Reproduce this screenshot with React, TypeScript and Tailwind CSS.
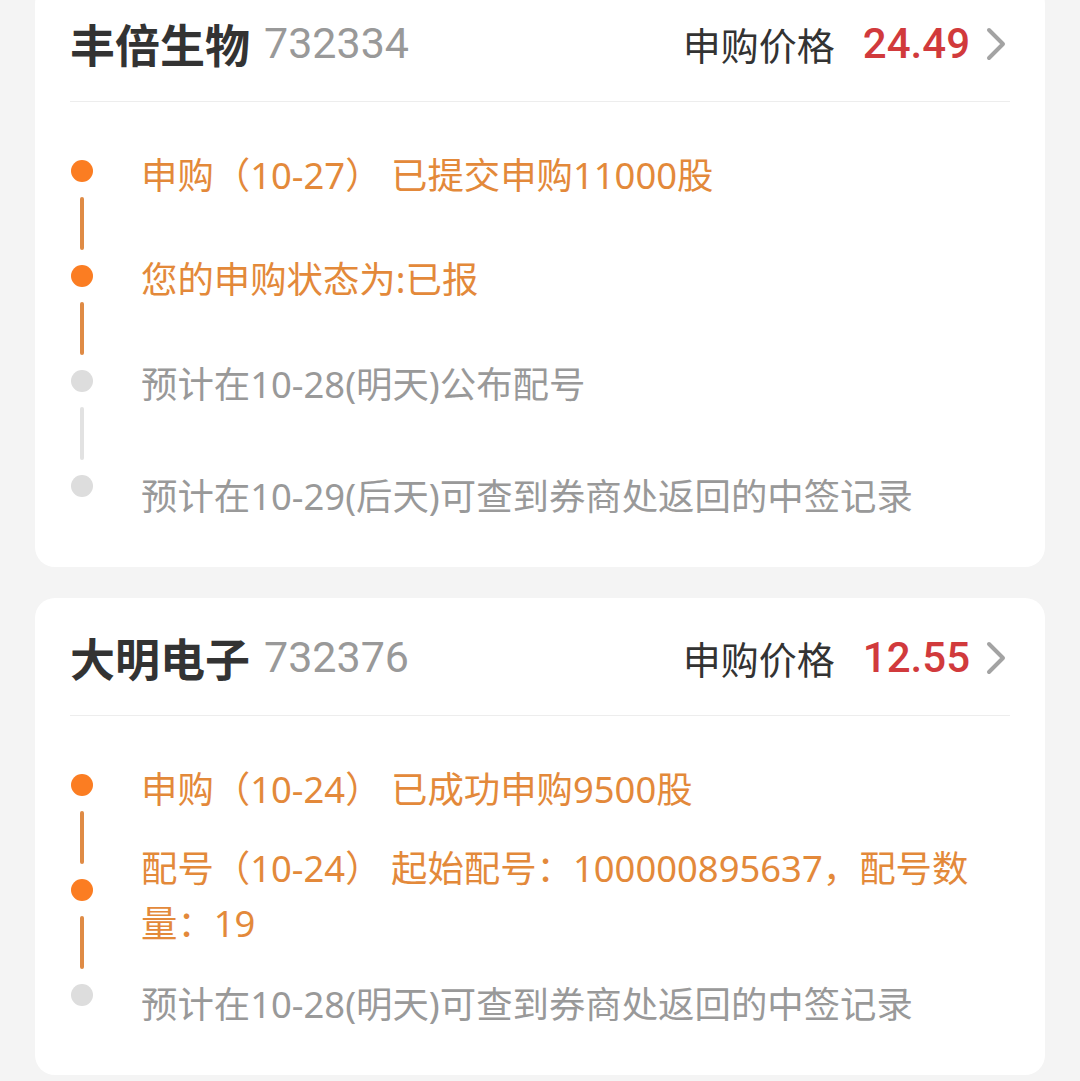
import React from "react";

type Item = { text: string; active: boolean; mt: string };
type Card = {
  name: string;
  code: string;
  price: string;
  dots: { active: boolean; lineActive?: boolean }[];
  items: Item[];
  extra: string;
};

const cards: Card[] = [
  {
    name: "丰倍生物",
    code: "732334",
    price: "24.49",
    dots: [
      { active: true, lineActive: true },
      { active: true, lineActive: true },
      { active: false, lineActive: false },
      { active: false },
    ],
    items: [
      { text: "申购（10-27） 已提交申购11000股", active: true, mt: "mt-0" },
      { text: "您的申购状态为:已报", active: true, mt: "mt-[49px]" },
      { text: "预计在10-28(明天)公布配号", active: false, mt: "mt-[50px]" },
      { text: "预计在10-29(后天)可查到券商处返回的中签记录", active: false, mt: "mt-[57px]" },
    ],
    extra: "-mt-[16px]",
  },
  {
    name: "大明电子",
    code: "732376",
    price: "12.55",
    dots: [
      { active: true, lineActive: true },
      { active: true, lineActive: true },
      { active: false },
    ],
    items: [
      { text: "申购（10-24） 已成功申购9500股", active: true, mt: "mt-0" },
      { text: "配号（10-24） 起始配号：100000895637，配号数量：19", active: true, mt: "mt-[24px]" },
      { text: "预计在10-28(明天)可查到券商处返回的中签记录", active: false, mt: "mt-[26px]" },
    ],
    extra: "mt-[31px]",
  },
];

const cjk = { fontFamily: '"Noto Sans CJK SC", "Noto Sans", sans-serif' };

function Chevron() {
  return (
    <svg width="22" height="36" viewBox="0 0 22 36" className="ml-[15px] mr-[3px] shrink-0">
      <polyline
        points="4,4 18,18 4,32"
        fill="none"
        stroke="#a3a3a3"
        strokeWidth="4"
        strokeLinecap="round"
        strokeLinejoin="round"
      />
    </svg>
  );
}

function CardView({ card }: { card: Card }) {
  return (
    <div className={`mx-[35px] rounded-[20px] bg-white px-[35px] pb-[43px] ${card.extra}`}>
      <div className="flex h-[117px] items-center justify-between pt-[2px]">
        <div className="flex items-center">
          <span className="text-[45px] font-bold leading-none text-[#333333]" style={cjk}>
            {card.name}
          </span>
          <span
            className="ml-[14px] text-[43px] leading-none text-[#999999]"
            style={{ fontFamily: 'Roboto, "Noto Sans", sans-serif' }}
          >
            {card.code}
          </span>
        </div>
        <div className="flex items-center">
          <span className="text-[38px] leading-none text-[#333333]" style={cjk}>
            申购价格
          </span>
          <span
            className="ml-[28px] text-[42px] font-medium leading-none text-[#d13a3c]"
            style={{ fontFamily: 'Roboto, "Noto Sans", sans-serif' }}
          >
            {card.price}
          </span>
          <Chevron />
        </div>
      </div>
      <div className="h-px bg-[#ededed]" />
      <div className="flex pt-[46px]">
        <div className="flex w-[23px] shrink-0 flex-col items-center pt-[12px]">
          {card.dots.map((d, i) => (
            <React.Fragment key={i}>
              <div
                className={`h-[22px] w-[22px] rounded-full ${d.active ? "bg-[#fb7d22]" : "bg-[#dddddd]"}`}
              />
              {i < card.dots.length - 1 && (
                <div
                  className={`my-[15px] h-[53px] w-[4px] rounded-full ${
                    d.lineActive ? "bg-[#df8b45]" : "bg-[#e2e2e2]"
                  }`}
                />
              )}
            </React.Fragment>
          ))}
        </div>
        <div className="ml-[48px] flex min-w-0 flex-1 flex-col">
          {card.items.map((it, i) => (
            <div
              key={i}
              className={`${it.mt} text-[36.4px] leading-[55px] ${it.active ? "text-[#e3893a]" : "text-[#999999]"}`}
              style={{ fontFamily: '"Noto Sans", "Noto Sans CJK SC", sans-serif' }}
            >
              {it.text}
            </div>
          ))}
        </div>
      </div>
    </div>
  );
}

export default function App() {
  return (
    <div className="min-h-screen overflow-hidden bg-[#f4f4f4] pb-[40px]">
      {cards.map((c, i) => (
        <CardView key={i} card={c} />
      ))}
    </div>
  );
}
